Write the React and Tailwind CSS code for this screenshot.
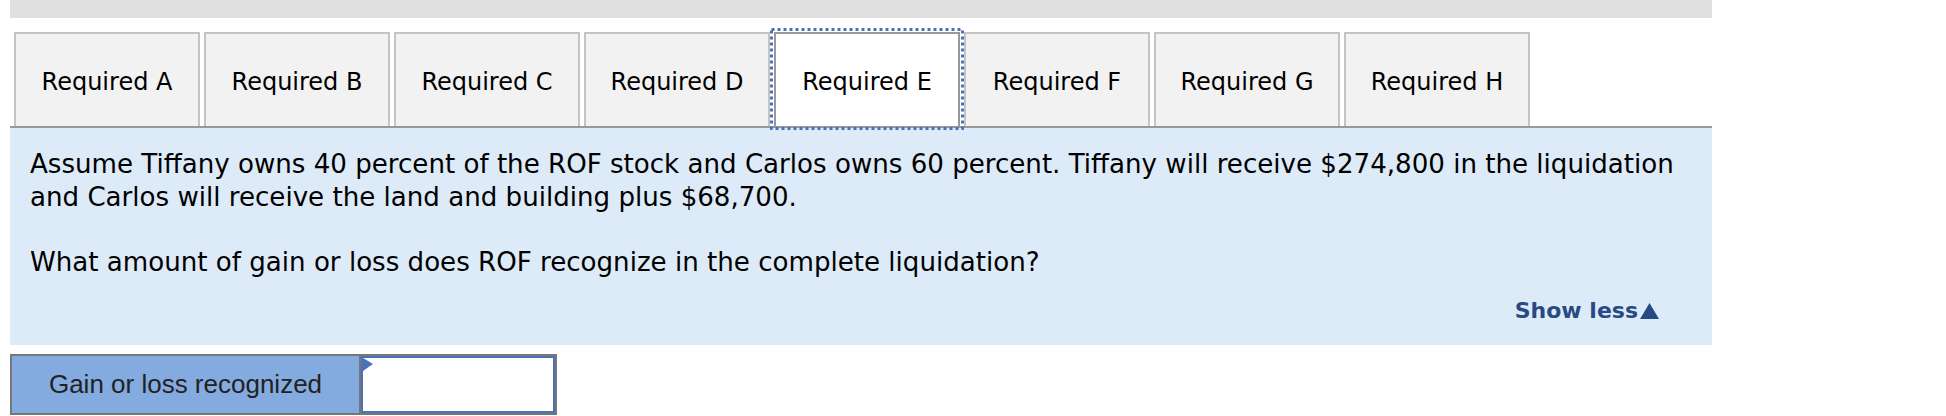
const tabs = ['A', 'B', 'C', 'D', 'E', 'F', 'G', 'H']
const active = 'E'

export default function App() {
  return (
    <div className="w-[1946px] h-[416px] overflow-hidden bg-white">
      <div className="ml-[10px] w-[1702px]">
        <div className="h-[18px] bg-[#e0e0e0]" />

        <div className="mt-[14px] flex gap-[4px] pl-[4px] border-b-2 border-[#999999]">
          {tabs.map((t) => {
            const isActive = t === active
            return (
              <div
                key={t}
                className={
                  isActive
                    ? 'relative w-[186px] h-[94px] flex items-center justify-center border-2 border-b-0 border-[#999999] bg-white text-[24px] text-black font-["DejaVu_Sans",Verdana,sans-serif]'
                    : 'relative w-[186px] h-[94px] flex items-center justify-center border-2 border-b-0 border-[#c4c4c4] bg-[#f2f2f2] text-[24px] text-black font-["DejaVu_Sans",Verdana,sans-serif]'
                }
              >
                <span className="mt-[3px]">Required {t}</span>
                {isActive && (
                  <svg className="absolute left-[-6px] top-[-6px] pointer-events-none" width="194" height="102">
                    <rect x="1.5" y="1.5" width="191" height="99" fill="none" stroke="#4a72b8" strokeWidth="3" strokeDasharray="3 3" />
                  </svg>
                )}
              </div>
            )
          })}
        </div>

        <div className="h-[217px] bg-[#ddeaf7] px-[20px] pt-[20px] text-[26.1px] leading-[32.5px] text-black font-['DejaVu_Sans',Verdana,sans-serif]">
          <p>
            Assume Tiffany owns 40 percent of the ROF stock and Carlos owns 60 percent. Tiffany will receive $274,800 in the liquidation
            and Carlos will receive the land and building plus $68,700.
          </p>
          <p className="mt-[32.5px]">What amount of gain or loss does ROF recognize in the complete liquidation?</p>
          <div className="mt-[16px] flex justify-end items-center pr-[32px] text-[#274a85] font-bold text-[22px] leading-[33px]">
            <span>Show less</span>
            <svg width="21" height="18" viewBox="0 0 21 18" className="ml-[1px]">
              <polygon points="10.5,1 20,17 1,17" fill="#274a85" />
            </svg>
          </div>
        </div>

        <div className="mt-[9px] w-[547px] h-[61px] flex border-2 border-[#777777]">
          <div className="w-[349px] h-full flex items-center justify-center bg-[#84abe0] border-r-2 border-[#777777] text-[26px] text-[#222222] font-['Liberation_Sans',Arial,sans-serif]">
            Gain or loss recognized
          </div>
          <div className="relative flex-1 h-full border-2 border-[#4a72b8] bg-white">
            <svg className="absolute left-0 top-0" width="12" height="14">
              <polygon points="0,0 10,6 0,13" fill="#4a72b8" />
            </svg>
          </div>
        </div>
      </div>
    </div>
  )
}
